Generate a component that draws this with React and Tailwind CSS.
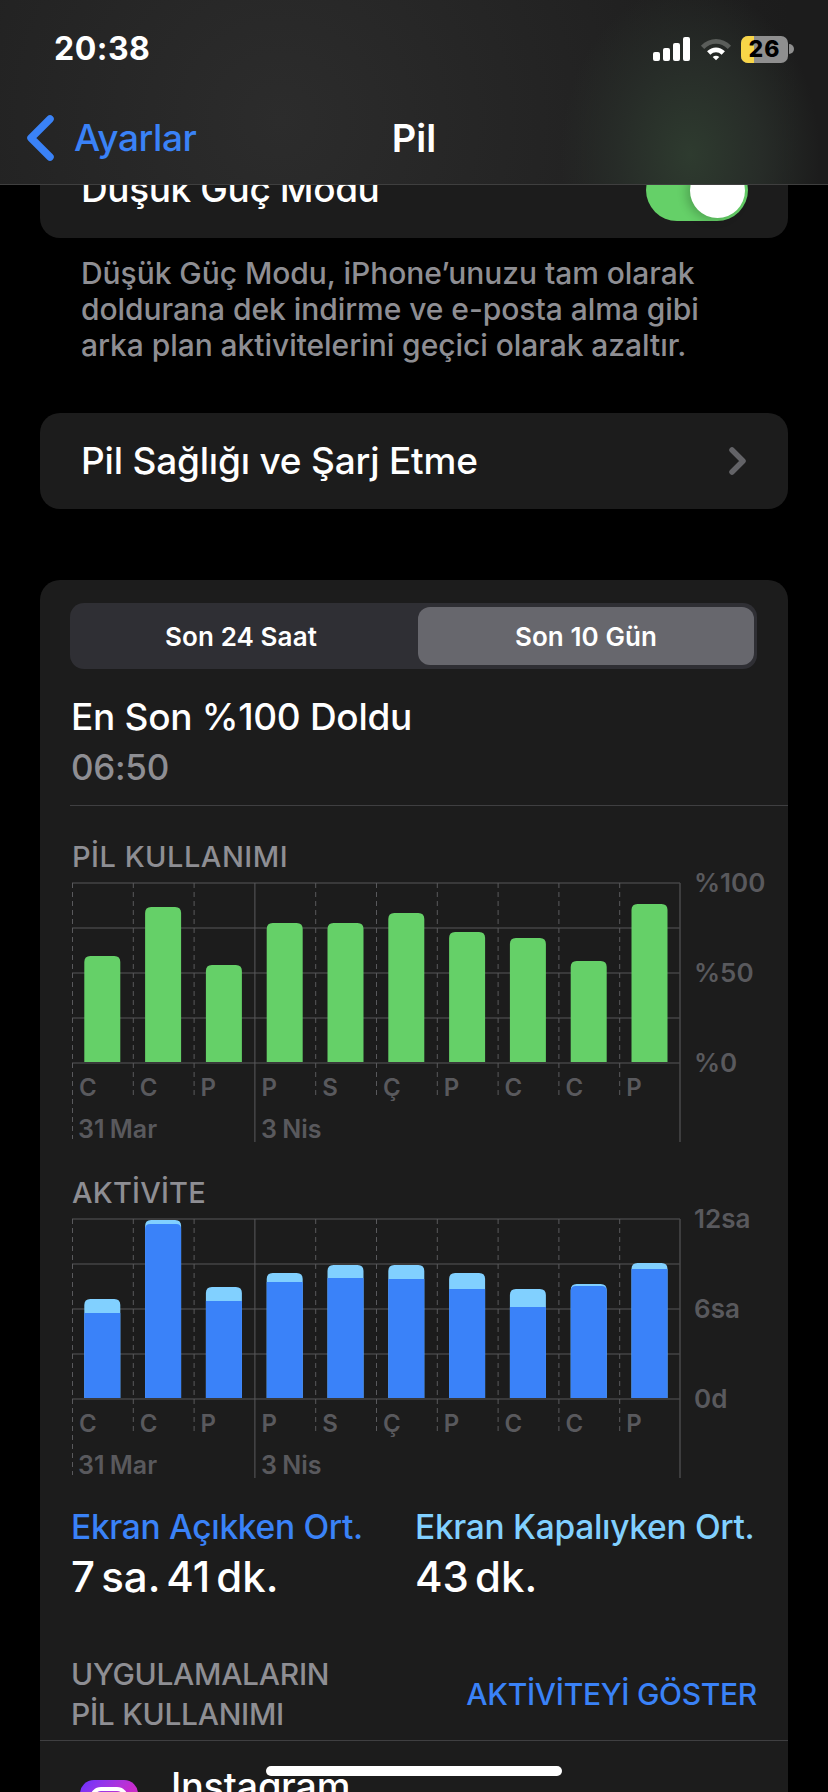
import React from 'react';

const batteryBars = [106, 155, 97, 139, 139, 149, 130, 124, 101, 158];
// [total height, light part height]
const activityBars = [
  [99, 14], [178, 4], [111, 14], [125, 9], [133, 13],
  [133, 14], [125, 16], [109, 18], [114, 2], [135, 6],
];
const days = ['C', 'C', 'P', 'P', 'S', 'Ç', 'P', 'C', 'C', 'P'];

const STEP = 60.8;
const barX = (i) => 12.3 + i * STEP;

const ChartLines = () => (
  <svg width="612" height="260" className="absolute left-0 top-0" fill="none">
    {[0, 45, 90, 135, 180].map((y) => (
      <line key={y} x1="0" x2="608" y1={y + 1} y2={y + 1} stroke="#434345" strokeWidth="1.5" />
    ))}
    {days.map((d, i) => {
      if (i === 3) return null;
      const x = 0.5 + i * STEP;
      return (
        <line key={i} x1={x} x2={x} y1="1" y2={i === 0 ? 257 : 215} stroke="#59595c" strokeWidth="1" strokeDasharray="5 4" />
      );
    })}
    <line x1="182.9" x2="182.9" y1="1" y2="260" stroke="#59595c" strokeWidth="1" />
    <line x1="608" x2="608" y1="1" y2="260" stroke="#48484a" strokeWidth="1.5" />
  </svg>
);

const Chart = ({ labels, children }) => (
  <div className="relative h-[260px] w-[716px]">
    <ChartLines />
    <div className="relative h-[181px] w-[608px]">{children}</div>
    <div className="relative grid w-[615px] grid-cols-10 pl-[7px] pt-[13px] text-[24px] font-semibold leading-[24px] text-[#59595d]">
      {days.map((d, i) => (
        <span key={i}>{d}</span>
      ))}
    </div>
    <div className="relative flex w-[608px] pl-[6px] pt-[17px] text-[25px] font-semibold leading-[24px] text-[#59595d] [word-spacing:-1px]">
      <span className="w-[183px]">31 Mar</span>
      <span>3 Nis</span>
    </div>
    {labels.map((l, i) => (
      <span
        key={l}
        className={
          'absolute left-[622px] text-[26px] font-semibold leading-[28px] text-[#59595d] ' +
          (i === 0 ? 'top-[-13px]' : i === 1 ? 'top-[77px]' : 'top-[167px]')
        }
      >
        {l}
      </span>
    ))}
  </div>
);

const BatteryChart = () => (
  <svg width="608" height="181" className="absolute left-0 top-0">
    {batteryBars.map((h, i) => (
      <path
        key={i}
        d={`M${barX(i)} 180V${180 - h + 6}q0-6 6-6h24q6 0 6 6V180z`}
        fill="#65d068"
      />
    ))}
  </svg>
);

const ActivityChart = () => (
  <svg width="608" height="181" className="absolute left-0 top-0">
    {activityBars.map(([h, light], i) => (
      <g key={i}>
        <path d={`M${barX(i)} 180V${180 - h + 6}q0-6 6-6h24q6 0 6 6V180z`} fill="#81d0ff" />
        <path
          d={
            light < 6
              ? `M${barX(i)} 180V${180 - h + light + 5}q0-5 5-5h26q5 0 5 5V180z`
              : `M${barX(i)} 180V${180 - h + light}h36V180z`
          }
          fill="#3a82f9"
        />
      </g>
    ))}
  </svg>
);

const StatusBar = () => (
  <div className="flex h-[74px] items-center justify-between pl-[54px] pr-[34px] pt-[24px]">
    <span className="text-[32px] font-bold leading-[36px] tracking-[0.5px] text-white">20:38</span>
    <div className="flex items-center">
      <svg width="38" height="24" viewBox="0 0 38 24" fill="#fff">
        <rect x="0" y="15" width="7" height="9" rx="2" />
        <rect x="10" y="11" width="7" height="13" rx="2" />
        <rect x="20" y="6" width="7" height="18" rx="2" />
        <rect x="30" y="0" width="7" height="24" rx="2" />
      </svg>
      <svg width="32" height="24" viewBox="0 0 34 24" className="ml-[9px]">
        <path d="M1 8.5C10 -1 24 -1 33 8.5L29.5 12C22.5 4.5 11.5 4.5 4.5 12z" fill="#5a5d5a" />
        <path d="M7.5 14.5C13 9 21 9 26.5 14.5L23 18C19.5 14.5 14.5 14.5 11 18z" fill="#fff" />
        <path d="M13.5 20.5C15.500 18.800 18.500 18.800 20.500 20.500L17 24z" fill="#fff" />
      </svg>
      <div className="relative ml-[9px] flex h-[27px] w-[47px] items-center justify-center overflow-hidden rounded-[7px] bg-[#8f8f8f]">
        <div className="absolute inset-y-0 left-0 w-[13px] bg-[#f8d548]" />
        <span className="relative text-[23px] font-extrabold leading-none tracking-[1px] text-black">26</span>
      </div>
      <div className="ml-[1px] h-[10px] w-[5px] rounded-r-full bg-[#8f8f8f]" />
    </div>
  </div>
);

const NavBar = () => (
  <div className="absolute inset-x-0 top-0 z-10 h-[185px] border-b border-[#3f3f3f] bg-[radial-gradient(ellipse_130px_170px_at_690px_155px,#2e3b2f_0,#272c28_55%,transparent_100%),radial-gradient(circle_at_280px_120px,#2c2c2c_0,#1c1c1c_520px)]">
    <StatusBar />
    <div className="relative mt-[28px] flex h-[72px] items-center justify-center">
      <div className="absolute left-[26px] top-[13px] flex items-center">
        <svg width="30" height="46" viewBox="0 0 30 46" fill="none">
          <path d="M24 4L5 23L24 42" stroke="#3a82f7" strokeWidth="7.500" strokeLinecap="round" strokeLinejoin="round" />
        </svg>
        <span className="ml-[18px] text-[37px] font-medium leading-[46px] tracking-[-0.4px] text-[#3a82f7]">Ayarlar</span>
      </div>
      <span className="text-[38px] font-semibold leading-[46px] text-white">Pil</span>
    </div>
  </div>
);

const App = () => {
  return (
    <div className="relative h-[1792px] w-[828px] overflow-hidden bg-black font-['Inter',sans-serif]">
      <NavBar />
      <div className="flex flex-col px-[40px] pt-[140px]">
        <div className="flex h-[98px] items-start justify-between rounded-b-[20px] bg-[#1c1c1c] pl-[41px] pr-[40px] pt-[19px]">
          <span className="mt-[9px] text-[37px] font-medium leading-[42px] tracking-[-0.4px] text-white">Düşük Güç Modu</span>
          <div className="flex h-[62px] w-[102px] items-center justify-end rounded-full bg-[#65d068] pr-[3px]">
            <div className="h-[55px] w-[55px] rounded-full bg-white shadow-[-4px_2px_10px_rgba(0,0,0,0.2)]" />
          </div>
        </div>

        <p className="pl-[41px] pr-[50px] pt-[17px] text-[30px] font-medium leading-[36px] tracking-[-0.05px] text-[#8e8e93]">
          Düşük Güç Modu, iPhone’unuzu tam olarak doldurana dek indirme ve e-posta alma gibi arka plan aktivitelerini geçici olarak azaltır.
        </p>

        <div className="mt-[50px] flex h-[96px] items-center justify-between rounded-[20px] bg-[#1c1c1c] pl-[41px] pr-[40px]">
          <span className="text-[37px] font-medium leading-[42px] tracking-[-0.2px] text-white">Pil Sağlığı ve Şarj Etme</span>
          <svg width="20" height="30" viewBox="0 0 20 30" fill="none">
            <path d="M4 4L15 15L4 26" stroke="#636367" strokeWidth="5.500" strokeLinecap="round" strokeLinejoin="round" />
          </svg>
        </div>

        <div className="mt-[71px] rounded-t-[20px] bg-[#1c1c1c] pt-[23px]">
          <div className="ml-[30px] mr-[31px] grid h-[66px] grid-cols-[334px_336px] gap-[10px] rounded-[14px] bg-[#2f2f34] p-[4px] text-[26px] font-semibold tracking-[0.1px] text-white">
            <div className="flex items-center justify-center">Son 24 Saat</div>
            <div className="flex items-center justify-center rounded-[12px] bg-[#67676d]">Son 10 Gün</div>
          </div>

          <div className="pl-[31px] pt-[26px]">
            <div className="text-[37px] font-medium leading-[44px] tracking-[-0.3px] text-white">En Son %100 Doldu</div>
            <div className="pt-[8px] text-[35px] font-medium leading-[40px] tracking-[-0.3px] text-[#8e8e93]">06:50</div>
          </div>

          <div className="ml-[30px] mt-[18px] h-px bg-[#3f3f41]" />

          <div className="pl-[32px]">
            <div className="pt-[34px] text-[29px] font-medium leading-[34px] tracking-[0.5px] text-[#8e8e93]">PİL KULLANIMI</div>
            <div className="pt-[8px]">
              <Chart labels={['%100', '%50', '%0']}>
                <BatteryChart />
              </Chart>
            </div>
            <div className="pt-[34px] text-[29px] font-medium leading-[34px] tracking-[0.2px] text-[#8e8e93]">AKTİVİTE</div>
            <div className="pt-[8px]">
              <Chart labels={['12sa', '6sa', '0d']}>
                <ActivityChart />
              </Chart>
            </div>
          </div>

          <div className="flex pl-[31px] pt-[29px]">
            <div className="w-[344px]">
              <div className="text-[33.500px] font-medium leading-[40px] tracking-[-0.3px] text-[#3a82f7]">Ekran Açıkken Ort.</div>
              <div className="pt-[4px] text-[42px] font-medium leading-[52px] text-white [word-spacing:-5px]">7 sa. 41 dk.</div>
            </div>
            <div>
              <div className="text-[33.500px] font-medium leading-[40px] tracking-[-0.3px] text-[#81d0ff]">Ekran Kapalıyken Ort.</div>
              <div className="pt-[4px] text-[42px] font-medium leading-[52px] text-white [word-spacing:-5px]">43 dk.</div>
            </div>
          </div>

          <div className="flex items-end justify-between pl-[31px] pr-[31px] pt-[51px]">
            <div className="text-[30px] font-medium leading-[40px] tracking-[-0.3px] text-[#8e8e93]">
              UYGULAMALARIN
              <br />
              PİL KULLANIMI
            </div>
            <div className="pb-[22px] text-[30px] font-medium leading-[36px] tracking-[-0.3px] text-[#3a82f7]">AKTİVİTEYİ GÖSTER</div>
          </div>

          <div className="mt-[6px] h-px bg-[#3f3f41]" />

          <div className="flex items-start pl-[40px] pt-[22px]">
            <div className="mt-[17px] h-[58px] w-[58px] rounded-[14px] bg-gradient-to-br from-[#6a2cff] via-[#c42bd0] to-[#f0309a] px-[10px] pt-[7px]">
              <div className="h-[38px] w-[38px] rounded-[11px] border-[4px] border-white" />
            </div>
            <span className="ml-[33px] text-[38px] font-medium leading-[46px] tracking-[-0.3px] text-white">Instagram</span>
          </div>
        </div>
      </div>
      <div className="absolute left-[266px] top-[1766px] h-[10px] w-[296px] rounded-full bg-white" />
    </div>
  );
};

export default App;
